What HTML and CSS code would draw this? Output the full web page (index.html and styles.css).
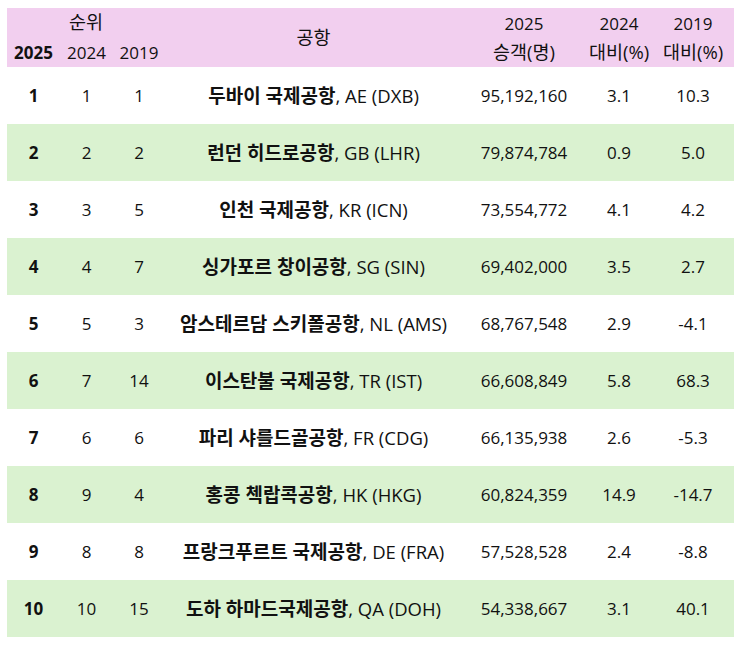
FILE: index.html
```html
<!DOCTYPE html>
<html lang="ko">
<head>
<meta charset="utf-8">
<title>공항 승객 순위</title>
<link rel="stylesheet" href="styles.css">
</head>
<body>
<table class="rank">
  <colgroup>
    <col class="c-r1"><col class="c-r2"><col class="c-r3">
    <col class="c-name"><col class="c-pax"><col class="c-p1"><col class="c-p2">
  </colgroup>
  <thead>
    <tr class="h1">
      <th colspan="3"><span class="ko">순위</span></th>
      <th rowspan="2"><span class="ko">공항</span></th>
      <th rowspan="2">2025<br><span class="ko">승객(명)</span></th>
      <th rowspan="2">2024<br><span class="ko">대비(%)</span></th>
      <th rowspan="2">2019<br><span class="ko">대비(%)</span></th>
    </tr>
    <tr class="h2">
      <th class="b">2025</th>
      <th>2024</th>
      <th>2019</th>
    </tr>
  </thead>
  <tbody>
    <tr><td class="b">1</td><td>1</td><td>1</td><td class="name"><b>두바이 국제공항</b>, AE (DXB)</td><td>95,192,160</td><td>3.1</td><td>10.3</td></tr>
    <tr><td class="b">2</td><td>2</td><td>2</td><td class="name"><b>런던 히드로공항</b>, GB (LHR)</td><td>79,874,784</td><td>0.9</td><td>5.0</td></tr>
    <tr><td class="b">3</td><td>3</td><td>5</td><td class="name"><b>인천 국제공항</b>, KR (ICN)</td><td>73,554,772</td><td>4.1</td><td>4.2</td></tr>
    <tr><td class="b">4</td><td>4</td><td>7</td><td class="name"><b>싱가포르 창이공항</b>, SG (SIN)</td><td>69,402,000</td><td>3.5</td><td>2.7</td></tr>
    <tr><td class="b">5</td><td>5</td><td>3</td><td class="name"><b>암스테르담 스키폴공항</b>, NL (AMS)</td><td>68,767,548</td><td>2.9</td><td>-4.1</td></tr>
    <tr><td class="b">6</td><td>7</td><td>14</td><td class="name"><b>이스탄불 국제공항</b>, TR (IST)</td><td>66,608,849</td><td>5.8</td><td>68.3</td></tr>
    <tr><td class="b">7</td><td>6</td><td>6</td><td class="name"><b>파리 샤를드골공항</b>, FR (CDG)</td><td>66,135,938</td><td>2.6</td><td>-5.3</td></tr>
    <tr><td class="b">8</td><td>9</td><td>4</td><td class="name"><b>홍콩 첵랍콕공항</b>, HK (HKG)</td><td>60,824,359</td><td>14.9</td><td>-14.7</td></tr>
    <tr><td class="b">9</td><td>8</td><td>8</td><td class="name"><b>프랑크푸르트 국제공항</b>, DE (FRA)</td><td>57,528,528</td><td>2.4</td><td>-8.8</td></tr>
    <tr><td class="b">10</td><td>10</td><td>15</td><td class="name"><b>도하 하마드국제공항</b>, QA (DOH)</td><td>54,338,667</td><td>3.1</td><td>40.1</td></tr>
  </tbody>
</table>
</body>
</html>
```
FILE: styles.css
```css
html, body {
  margin: 0;
  padding: 0;
  background: #ffffff;
}
body {
  padding: 8px 7px;
  font-family: "Open Sans", "Noto Sans CJK KR", sans-serif;
  font-size: 17px;
  color: #111111;
}
.rank {
  border-collapse: collapse;
  table-layout: fixed;
  width: 727px;
}
.c-r1 { width: 53px; }
.c-r2 { width: 53px; }
.c-r3 { width: 52px; }
.c-name { width: 297px; }
.c-pax { width: 124px; }
.c-p1 { width: 66px; }
.c-p2 { width: 82px; }
th, td {
  padding: 0;
  text-align: center;
  white-space: nowrap;
}
thead th {
  background: #f2cfef;
  font-weight: normal;
  line-height: 29px;
}
.ko {
  font-size: 18.5px;
  line-height: 1;
}
.h1 th { height: 29px; }
.h2 th { height: 30px; }
th.b, td.b, b {
  font-weight: bold;
}
tbody td {
  height: 57px;
  line-height: 24px;
}
td.name {
  font-size: 18.5px;
}
td.name b {
  font-size: 19px;
}
tbody tr:nth-child(even) td {
  background: #daf2d0;
}
```
